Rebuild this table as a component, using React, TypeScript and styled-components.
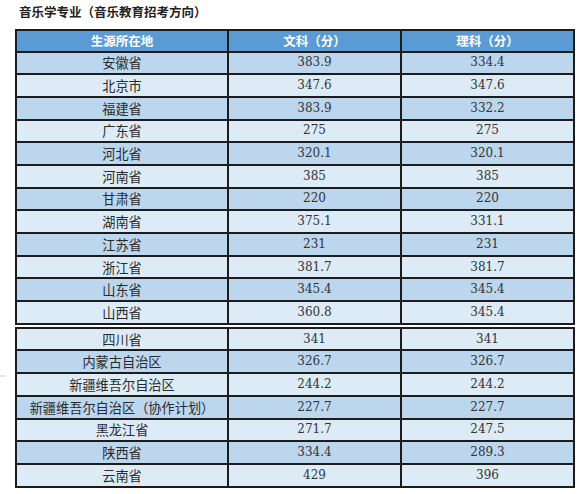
import styled, { createGlobalStyle } from "styled-components";

const GlobalStyle = createGlobalStyle`
  html, body {
    margin: 0;
    padding: 0;
    background: #ffffff;
  }
`;

type Row = { area: string; wen: string; li: string };

const firstRows: Row[] = [
  { area: "安徽省", wen: "383.9", li: "334.4" },
  { area: "北京市", wen: "347.6", li: "347.6" },
  { area: "福建省", wen: "383.9", li: "332.2" },
  { area: "广东省", wen: "275", li: "275" },
  { area: "河北省", wen: "320.1", li: "320.1" },
  { area: "河南省", wen: "385", li: "385" },
  { area: "甘肃省", wen: "220", li: "220" },
  { area: "湖南省", wen: "375.1", li: "331.1" },
  { area: "江苏省", wen: "231", li: "231" },
  { area: "浙江省", wen: "381.7", li: "381.7" },
  { area: "山东省", wen: "345.4", li: "345.4" },
  { area: "山西省", wen: "360.8", li: "345.4" },
];

const secondRows: Row[] = [
  { area: "四川省", wen: "341", li: "341" },
  { area: "内蒙古自治区", wen: "326.7", li: "326.7" },
  { area: "新疆维吾尔自治区", wen: "244.2", li: "244.2" },
  { area: "新疆维吾尔自治区（协作计划）", wen: "227.7", li: "227.7" },
  { area: "黑龙江省", wen: "271.7", li: "247.5" },
  { area: "陕西省", wen: "334.4", li: "289.3" },
  { area: "云南省", wen: "429", li: "396" },
];

const Page = styled.div`
  width: 581px;
  height: 494px;
  padding-top: 4px;
  box-sizing: border-box;
  position: relative;
  font-family: "Noto Sans CJK SC", "Noto Sans", sans-serif;
`;

const Title = styled.h1`
  margin: 0 0 10px 19px;
  font-size: 12.5px;
  line-height: 15px;
  font-weight: 700;
  color: #222;
`;

const Sheet = styled.table`
  margin-left: 15px;
  width: 558px;
  border-collapse: collapse;
  table-layout: fixed;
  & + & {
    margin-top: 2px;
  }
`;

const HeadCell = styled.th`
  height: 19.5px;
  padding: 0;
  border: 2px solid #1c1c1c;
  background: #5b9bd5;
  color: #ffffff;
  font-size: 12.5px;
  font-weight: 700;
  text-align: center;
  line-height: 18px;
`;

const BodyRow = styled.tr<{ $shade: boolean }>`
  background: ${(p) => (p.$shade ? "#bcd6ee" : "#ddebf7")};
`;

const AreaCell = styled.td`
  height: 20.7px;
  padding: 0;
  border: 2px solid #1c1c1c;
  text-align: center;
  font-size: 13.2px;
  line-height: 19px;
  color: #2a2a2a;
  white-space: nowrap;
`;

const ScoreCell = styled(AreaCell)`
  font-family: "DejaVu Serif", "Liberation Serif", serif;
  font-size: 12px;
  color: #333;
`;

const Speck = styled.span`
  position: absolute;
  left: 0;
  top: 375px;
  width: 5px;
  height: 2px;
  background: #e2e2e2;
`;

function Body({ rows, startShaded }: { rows: Row[]; startShaded: boolean }) {
  return (
    <tbody>
      {rows.map((r, i) => (
        <BodyRow key={r.area} $shade={startShaded ? i % 2 === 0 : i % 2 === 1}>
          <AreaCell>{r.area}</AreaCell>
          <ScoreCell>{r.wen}</ScoreCell>
          <ScoreCell>{r.li}</ScoreCell>
        </BodyRow>
      ))}
    </tbody>
  );
}

function Columns() {
  return (
    <colgroup>
      <col style={{ width: 212 }} />
      <col style={{ width: 173 }} />
      <col style={{ width: 173 }} />
    </colgroup>
  );
}

export default function App() {
  return (
    <Page>
      <GlobalStyle />
      <Title>音乐学专业（音乐教育招考方向）</Title>
      <Sheet>
        <Columns />
        <thead>
          <tr>
            <HeadCell>生源所在地</HeadCell>
            <HeadCell>文科（分）</HeadCell>
            <HeadCell>理科（分）</HeadCell>
          </tr>
        </thead>
        <Body rows={firstRows} startShaded />
      </Sheet>
      <Sheet>
        <Columns />
        <Body rows={secondRows} startShaded={false} />
      </Sheet>
      <Speck />
    </Page>
  );
}
